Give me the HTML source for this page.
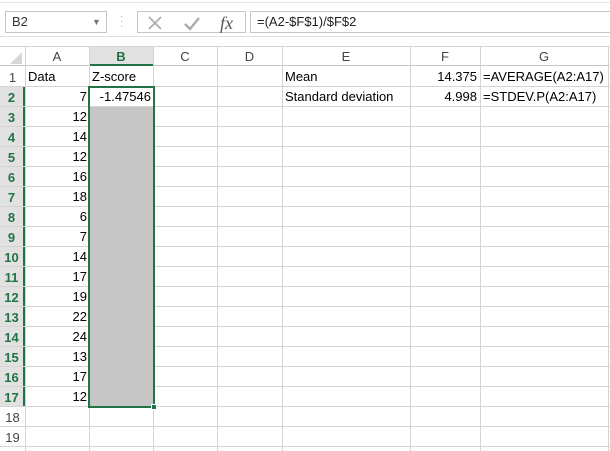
<!DOCTYPE html>
<html><head><style>
*{margin:0;padding:0;box-sizing:border-box}
html,body{width:610px;height:451px;overflow:hidden}
body{background:#fff;font-family:"Liberation Sans",Arial,sans-serif;font-size:13px;color:#000;position:relative}
.a{position:absolute}
.hl{position:absolute;height:1px;background:#d4d4d4}
.vl{position:absolute;width:1px;background:#d4d4d4}
.ch{position:absolute;top:47px;height:19px;text-align:center;line-height:20px;color:#444;font-size:13px}
.rh{position:absolute;left:0;width:25px;height:20px;text-align:center;line-height:22px;color:#444;font-size:13px;background:#fff}
.rh.s{background:#e1e1e1;color:#217346;font-weight:bold;border-right:2px solid #217346}
.c{position:absolute;height:20px;line-height:22px;white-space:nowrap}
</style></head><body>
<div class="hl" style="top:2px;left:0;width:610px;background:#e6e6e6"></div>
<div class="a" style="left:5px;top:11px;width:102px;height:22px;border:1px solid #c6c6c6;line-height:20px;padding-left:6px;color:#333">B2<span class="a" style="left:86px;top:0;color:#777;font-size:9px">&#9660;</span></div>
<div class="a" style="left:120px;top:14px;color:#aaa;font-size:10px;line-height:5px">·<br>·<br>·</div>
<div class="a" style="left:137px;top:11px;width:109px;height:22px;border:1px solid #c6c6c6"></div>
<svg class="a" style="left:145px;top:13px" width="100" height="20"><path d="M4 4 L16 16 M16 4 L4 16" stroke="#aaa" stroke-width="1.6"/><path d="M40 11 L45 16 L54 5" stroke="#aaa" stroke-width="2.4" fill="none"/><text x="75" y="16" font-family="Liberation Serif" font-style="italic" font-size="18" fill="#555">fx</text></svg>
<div class="a" style="left:250px;top:11px;width:370px;height:22px;border:1px solid #c6c6c6;line-height:20px;padding-left:6px;color:#222">=(A2-$F$1)/$F$2</div>
<div class="hl" style="top:36px;left:0;width:610px;background:#e0e0e0"></div>
<div class="a" style="top:46px;left:0;width:610px;height:20px;background:#fff;border-top:1px solid #d4d4d4;border-bottom:1px solid #c6c6c6"></div>
<svg class="a" style="left:9px;top:51px" width="14" height="14"><path d="M13 1 L13 13 L1 13Z" fill="#d6d6d6"/></svg>
<div class="a" style="left:89px;top:47px;width:64px;height:19px;background:#e1e1e1;border-bottom:2px solid #217346"></div>
<div class="ch" style="left:25px;width:64px">A</div>
<div class="ch" style="left:89px;width:64px;color:#217346;font-weight:bold">B</div>
<div class="ch" style="left:153px;width:64px">C</div>
<div class="ch" style="left:217px;width:65px">D</div>
<div class="ch" style="left:282px;width:128px">E</div>
<div class="ch" style="left:410px;width:70px">F</div>
<div class="ch" style="left:480px;width:128px">G</div>
<div id="g"></div>
<script>
var h='';var xs=[25,89,153,217,282,410,480,608];
for(var i=0;i<xs.length;i++)h+='<div class="vl" style="left:'+xs[i]+'px;top:47px;height:404px"></div>';
for(var r=0;r<19;r++){var y=66+r*20;h+='<div class="hl" style="top:'+(y+20)+'px;left:0;width:610px"></div>';
h+='<div class="rh'+((r>=1&&r<=16)?' s':'')+'" style="top:'+(y+1)+'px;height:19px">'+(r+1)+'</div>';}
var d=[7,12,14,12,16,18,6,7,14,17,19,22,24,13,17,12];
for(var k=0;k<16;k++)h+='<div class="c" style="left:25px;width:62px;text-align:right;top:'+(86+k*20)+'px">'+d[k]+'</div>';
document.getElementById('g').innerHTML=h;
</script>
<div class="a" style="left:90px;top:107px;width:63px;height:299px;background:#c6c6c6"></div>
<div class="a" style="left:88px;top:86px;width:67px;height:322px;border:2px solid #217346"></div>
<div class="a" style="left:151px;top:404px;width:6px;height:6px;background:#217346;border:1px solid #fff"></div>
<div class="c" style="left:28px;top:66px">Data</div>
<div class="c" style="left:92px;top:66px">Z-score</div>
<div class="c" style="left:90px;width:61px;text-align:right;top:86px">-1.47546</div>
<div class="c" style="left:285px;top:66px">Mean</div>
<div class="c" style="left:285px;top:86px">Standard deviation</div>
<div class="c" style="left:410px;width:67px;text-align:right;top:66px">14.375</div>
<div class="c" style="left:410px;width:67px;text-align:right;top:86px">4.998</div>
<div class="c" style="left:483px;top:66px">=AVERAGE(A2:A17)</div>
<div class="c" style="left:483px;top:86px">=STDEV.P(A2:A17)</div>
</body></html>
